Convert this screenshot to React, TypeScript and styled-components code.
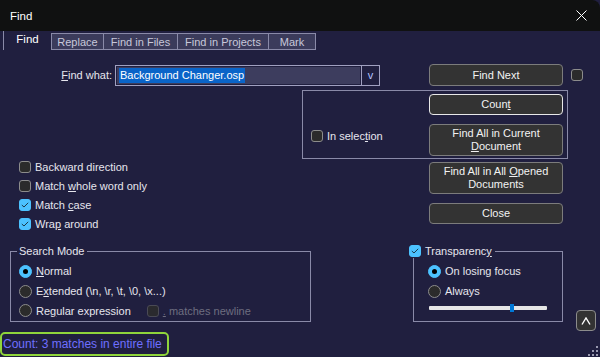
import styled, { createGlobalStyle } from "styled-components";

const GlobalStyle = createGlobalStyle`
  html, body {
    margin: 0;
    padding: 0;
    background: #201f3f;
  }
  * {
    box-sizing: border-box;
  }
`;

const Window = styled.div`
  position: relative;
  width: 600px;
  height: 357px;
  overflow: hidden;
  background: #201f3f;
  color: #e6e6ee;
  font-family: "Liberation Sans", Arial, sans-serif;
  font-size: 11px;
  border-top-right-radius: 8px;
  display: flex;
  flex-direction: column;
`;

const TitleBar = styled.div`
  height: 31px;
  flex: none;
  background: #101111;
  display: flex;
  align-items: center;
  justify-content: space-between;
  padding: 0 13px 0 10px;
  font-size: 11.5px;
  color: #ffffff;
`;

const TabStrip = styled.div`
  display: flex;
  align-items: flex-end;
  height: 19px;
  padding-left: 3px;
`;

const Tab = styled.div<{ $w: number; $active?: boolean }>`
  width: ${(p) => p.$w}px;
  height: ${(p) => (p.$active ? 19 : 17)}px;
  display: flex;
  align-items: center;
  justify-content: center;
  padding-bottom: ${(p) => (p.$active ? 3 : 0)}px;
  margin-left: ${(p) => (p.$active ? 0 : -1)}px;
  background: ${(p) => (p.$active ? "transparent" : "#3b3b5b")};
  border: ${(p) => (p.$active ? "none" : "1px solid #8a8aa8")};
  border-left: 1px solid #8a8aa8;
  color: ${(p) => (p.$active ? "#ffffff" : "#c8c8da")};
  font-size: ${(p) => (p.$active ? 11.5 : 11)}px;
  &:nth-child(2) {
    margin-left: 0;
  }
`;

const FindRow = styled.div`
  display: flex;
  align-items: center;
  margin-top: 14px;
  height: 22px;
`;

const FieldLabel = styled.div`
  width: 112px;
  text-align: right;
  margin-right: 3px;
`;

const Combo = styled.div`
  width: 265px;
  height: 21px;
  display: flex;
  border: 1px solid #a0a0c0;
`;

const EditArea = styled.div`
  flex: 1;
  margin: 1px;
  background: #3d3d5e;
  display: flex;
  align-items: center;
  padding-left: 2px;
`;

const Selected = styled.span`
  background: #0a64c8;
  color: #ffffff;
  line-height: 15px;
  padding: 0 1px;
`;

const DropButton = styled.div`
  width: 18px;
  border-left: 1px solid #a0a0c0;
  display: flex;
  align-items: center;
  justify-content: center;
  color: #b4c4ff;
  font-size: 11px;
`;

const Button = styled.div<{ $h?: number; $focus?: boolean }>`
  width: 134px;
  height: ${(p) => p.$h ?? 21}px;
  flex: none;
  background: #333333;
  border: 1px solid ${(p) => (p.$focus ? "#e8e8e8" : "#7c7c7c")};
  border-radius: 4px;
  display: flex;
  align-items: center;
  justify-content: center;
  text-align: center;
  line-height: 13px;
  color: #f2f2f2;
`;

const Box = styled.span<{ $on?: boolean; $dim?: boolean }>`
  width: 12px;
  height: 12px;
  flex: none;
  border-radius: 3px;
  background: ${(p) => (p.$on ? "#4cc2ff" : p.$dim ? "#2a2a2e" : "#2b2b2b")};
  border: 1px solid ${(p) => (p.$on ? "#4cc2ff" : p.$dim ? "#4a4a55" : "#8c8c8c")};
  display: inline-flex;
  align-items: center;
  justify-content: center;
`;

const Radio = styled.span<{ $on?: boolean }>`
  width: 13px;
  height: 13px;
  flex: none;
  border-radius: 50%;
  background: ${(p) => (p.$on ? "#4cc2ff" : "#2b2b2b")};
  border: 1px solid ${(p) => (p.$on ? "#4cc2ff" : "#8c8c8c")};
  display: inline-flex;
  align-items: center;
  justify-content: center;
  &::after {
    content: "";
    display: ${(p) => (p.$on ? "block" : "none")};
    width: 5px;
    height: 5px;
    border-radius: 50%;
    background: #000000;
  }
`;

const Option = styled.div<{ $h?: number; $dim?: boolean }>`
  height: ${(p) => p.$h ?? 19}px;
  display: flex;
  align-items: center;
  gap: 4px;
  color: ${(p) => (p.$dim ? "#6e6e80" : "#e6e6ee")};
  white-space: nowrap;
`;

const Mid = styled.div`
  display: flex;
`;

const LeftCol = styled.div`
  width: 302px;
  padding-top: 71px;
  padding-left: 19px;
`;

const RightCol = styled.div`
  display: flex;
  flex-direction: column;
`;

const SelectionGroup = styled.div`
  margin-top: 4px;
  width: 266px;
  height: 69px;
  border: 1px solid #8a8aa8;
  display: grid;
  grid-template-columns: 126px 134px;
`;

const SelectionLeft = styled.div`
  padding-top: 35px;
  padding-left: 8px;
`;

const ButtonStack = styled.div<{ $left: number; $top: number }>`
  display: flex;
  flex-direction: column;
  gap: 9px;
  margin-left: ${(p) => p.$left}px;
  padding-top: ${(p) => p.$top}px;
`;

const BottomRow = styled.div`
  display: flex;
  align-items: flex-start;
  height: 78px;
  margin-top: 11px;
  margin-left: 10px;
`;

const Group = styled.fieldset<{ $w: number; $pl: number }>`
  width: ${(p) => p.$w}px;
  height: 78px;
  margin: 0;
  padding: 0 0 0 ${(p) => p.$pl}px;
  border: 1px solid #8a8aa8;
  min-inline-size: 0;
`;

const Legend = styled.legend<{ $ml?: number }>`
  padding: 0 3px 0 2px;
  margin-left: ${(p) => p.$ml ?? 0}px;
  line-height: 14px;
  display: flex;
  align-items: center;
  gap: 4px;
`;

const RadioList = styled.div<{ $pl: number }>`
  padding-left: ${(p) => p.$pl}px;
  padding-top: 3px;
  display: flex;
  flex-direction: column;
`;

const Slider = styled.div`
  position: relative;
  margin-top: 5px;
  margin-left: 1px;
  width: 118px;
  height: 4px;
  background: #e6e6e6;
  border-radius: 1px;
`;

const Thumb = styled.span`
  position: absolute;
  left: 81px;
  top: -2px;
  width: 4px;
  height: 8px;
  background: #0078d7;
`;

const UpButton = styled.div`
  flex: none;
  margin-top: 66px;
  margin-left: 13px;
  width: 20px;
  height: 21px;
  border: 1px solid #8c8c8c;
  border-radius: 4px;
  background: #333333;
  display: flex;
  align-items: center;
  justify-content: center;
`;

const Status = styled.div`
  margin-top: 10px;
  width: 169px;
  height: 24px;
  border: 2px solid #8fd43b;
  border-radius: 5px;
  display: flex;
  align-items: center;
  padding-left: 1px;
  color: #6f6fff;
  font-size: 12px;
  white-space: nowrap;
`;

const Grip = styled.svg`
  position: absolute;
  right: 2px;
  bottom: 1px;
`;

const U = styled.span`
  text-decoration: underline;
  text-underline-offset: 1px;
`;

const Check = () => (
  <svg width="8" height="6" viewBox="0 0 8 6">
    <path d="M0.8 3 L3 5 L7.2 0.8" fill="none" stroke="#1c3a4a" strokeWidth="1" />
  </svg>
);

const CheckOption = ({ on, children }: { on?: boolean; children: React.ReactNode }) => (
  <Option>
    <Box $on={on}>{on && <Check />}</Box>
    <span>{children}</span>
  </Option>
);

const RadioOption = ({ on, children }: { on?: boolean; children: React.ReactNode }) => (
  <Option $h={20}>
    <Radio $on={on} />
    <span>{children}</span>
  </Option>
);

export default function App() {
  return (
    <Window>
      <GlobalStyle />
      <TitleBar>
        <span>Find</span>
        <svg width="11" height="11" viewBox="0 0 11 11">
          <path d="M0.5 0.5 L10.5 10.5 M10.5 0.5 L0.5 10.5" stroke="#ffffff" strokeWidth="1" />
        </svg>
      </TitleBar>

      <TabStrip>
        <Tab $w={48} $active>
          Find
        </Tab>
        <Tab $w={53}>Replace</Tab>
        <Tab $w={75}>Find in Files</Tab>
        <Tab $w={92}>Find in Projects</Tab>
        <Tab $w={48}>Mark</Tab>
      </TabStrip>

      <FindRow>
        <FieldLabel>
          <U>F</U>ind what:
        </FieldLabel>
        <Combo>
          <EditArea>
            <Selected>Background Changer.osp</Selected>
          </EditArea>
          <DropButton>v</DropButton>
        </Combo>
        <Button style={{ marginLeft: 49 }} $h={22}>
          Find Next
        </Button>
        <Box style={{ marginLeft: 8 }} />
      </FindRow>

      <Mid>
        <LeftCol>
          <CheckOption>Backward direction</CheckOption>
          <CheckOption>
            Match <U>w</U>hole word only
          </CheckOption>
          <CheckOption on>
            Match <U>c</U>ase
          </CheckOption>
          <CheckOption on>
            Wra<U>p</U> around
          </CheckOption>
        </LeftCol>
        <RightCol>
          <SelectionGroup>
            <SelectionLeft>
              <Option>
                <Box />
                <span>
                  In selec<U>t</U>ion
                </span>
              </Option>
            </SelectionLeft>
            <ButtonStack $left={0} $top={3}>
              <Button $focus>
                <span>
                  Coun<U>t</U>
                </span>
              </Button>
              <Button $h={32}>
                <span>
                  Find All in Current
                  <br />
                  <U>D</U>ocument
                </span>
              </Button>
            </ButtonStack>
          </SelectionGroup>
          <ButtonStack $left={127} $top={3}>
            <Button $h={32}>
              <span>
                Find All in All <U>O</U>pened
                <br />
                Documents
              </span>
            </Button>
            <Button>Close</Button>
          </ButtonStack>
        </RightCol>
      </Mid>

      <BottomRow>
        <Group $w={301} $pl={6}>
          <Legend>Search Mode</Legend>
          <RadioList $pl={2}>
            <RadioOption on>
              <U>N</U>ormal
            </RadioOption>
            <RadioOption>
              E<U>x</U>tended (\n, \r, \t, \0, \x...)
            </RadioOption>
            <Option $h={19}>
              <Radio />
              <span>
                Re<U>g</U>ular expression
              </span>
              <Box $dim style={{ marginLeft: 12 }} />
              <Option $dim>
                <span>
                  <U>.</U> matches newline
                </span>
              </Option>
            </Option>
          </RadioList>
        </Group>

        <Group $w={150} $pl={14} style={{ marginLeft: 102 }}>
          <Legend $ml={-21}>
            <Box $on>
              <Check />
            </Box>
            <span>
              Transparenc<U>y</U>
            </span>
          </Legend>
          <RadioList $pl={0}>
            <RadioOption on>On losing focus</RadioOption>
            <RadioOption>Always</RadioOption>
            <Slider>
              <Thumb />
            </Slider>
          </RadioList>
        </Group>

        <UpButton>
          <svg width="10" height="8" viewBox="0 0 10 8">
            <path d="M1 7.5 L5 1 L9 7.5" fill="none" stroke="#ffffff" strokeWidth="1.4" />
          </svg>
        </UpButton>
      </BottomRow>

      <Status>Count: 3 matches in entire file</Status>

      <Grip width="10" height="10" viewBox="0 0 10 10">
        <g fill="#9a9ab0">
          <rect x="8" y="0" width="2" height="2" />
          <rect x="4" y="4" width="2" height="2" />
          <rect x="8" y="4" width="2" height="2" />
          <rect x="0" y="8" width="2" height="2" />
          <rect x="4" y="8" width="2" height="2" />
          <rect x="8" y="8" width="2" height="2" />
        </g>
      </Grip>
    </Window>
  );
}
